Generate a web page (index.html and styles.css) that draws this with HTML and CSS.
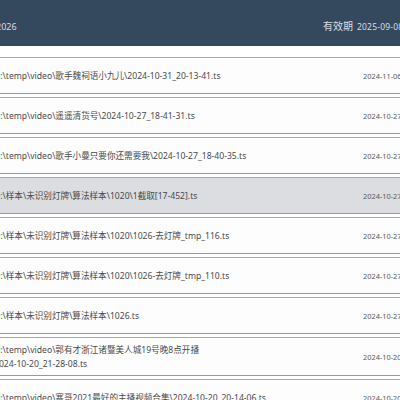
FILE: index.html
```html
<!DOCTYPE html>
<html lang="zh">
<head>
<meta charset="utf-8">
<link rel="stylesheet" href="styles.css">
</head>
<body>
<div class="page">
  <header class="topbar">
    <div class="brand">2026</div>
    <div class="expire"><span class="label">有效期</span><span class="value">2025-09-08 23:59:59</span></div>
  </header>
  <ul class="list">
    <li class="item"><span class="name">D:\temp\video\歌手魏祠语小九儿\2024-10-31_20-13-41.ts</span><span class="date">2024-11-06 15:21:08</span></li>
    <li class="item"><span class="name">D:\temp\video\遥遥清货号\2024-10-27_18-41-31.ts</span><span class="date">2024-10-27 19:02:11</span></li>
    <li class="item"><span class="name">D:\temp\video\歌手小曼只要你还需要我\2024-10-27_18-40-35.ts</span><span class="date">2024-10-27 18:58:42</span></li>
    <li class="item active"><span class="name">D:\样本\未识别灯牌\算法样本\1020\1截取[17-452].ts</span><span class="date">2024-10-27 16:30:25</span></li>
    <li class="item"><span class="name">D:\样本\未识别灯牌\算法样本\1020\1026-去灯牌_tmp_116.ts</span><span class="date">2024-10-27 16:12:40</span></li>
    <li class="item"><span class="name">D:\样本\未识别灯牌\算法样本\1020\1026-去灯牌_tmp_110.ts</span><span class="date">2024-10-27 16:05:13</span></li>
    <li class="item"><span class="name">D:\样本\未识别灯牌\算法样本\1026.ts</span><span class="date">2024-10-27 15:47:56</span></li>
    <li class="item tall"><span class="name">D:\temp\video\郭有才浙江诸暨美人城19号晚8点开播<br>2024-10-20_21-28-08.ts</span><span class="date">2024-10-20 22:14:30</span></li>
    <li class="item"><span class="name">D:\temp\video\寒哥2021最好的主播视频合集\2024-10-20_20-14-06.ts</span><span class="date">2024-10-20 21:03:19</span></li>
  </ul>
</div>
</body>
</html>
```

FILE: styles.css
```css
html, body {
  margin: 0;
  padding: 0;
  background: #ffffff;
  overflow: hidden;
}
body {
  width: 400px;
  height: 400px;
  font-family: "Noto Sans", "Noto Sans CJK SC", sans-serif;
}
.page {
  width: 560px;
  margin-left: -16px;
}
.topbar {
  height: 46px;
  background: #34495e;
  display: grid;
  grid-template-columns: 339px 1fr;
  align-items: center;
  color: #d8dde3;
}
.brand {
  padding-left: 12px;
  font-size: 9px;
  padding-top: 6px;
}
.expire {
  display: flex;
  align-items: baseline;
  gap: 4px;
  padding-top: 4px;
}
.label {
  font-size: 10px;
}
.value {
  font-size: 8.5px;
  letter-spacing: 0.2px;
}
.list {
  list-style: none;
  margin: 0;
  padding: 11px 0 0 0;
}
.item {
  display: grid;
  grid-template-columns: 379px 1fr;
  align-items: center;
  height: 35px;
  border-top: 1px solid #a9a9a9;
  border-bottom: 1px solid #9a9a9a;
  background: #fdfdfd;
  margin-bottom: 3px;
  color: #4a4a4a;
}
.item.tall {
  height: 37px;
}
.item.active {
  background: #dcdde1;
}
.name {
  padding-left: 10px;
  font-size: 8.6px;
  line-height: 14px;
}
.date {
  font-size: 7.4px;
  color: #5a5a5a;
  white-space: nowrap;
}
```
